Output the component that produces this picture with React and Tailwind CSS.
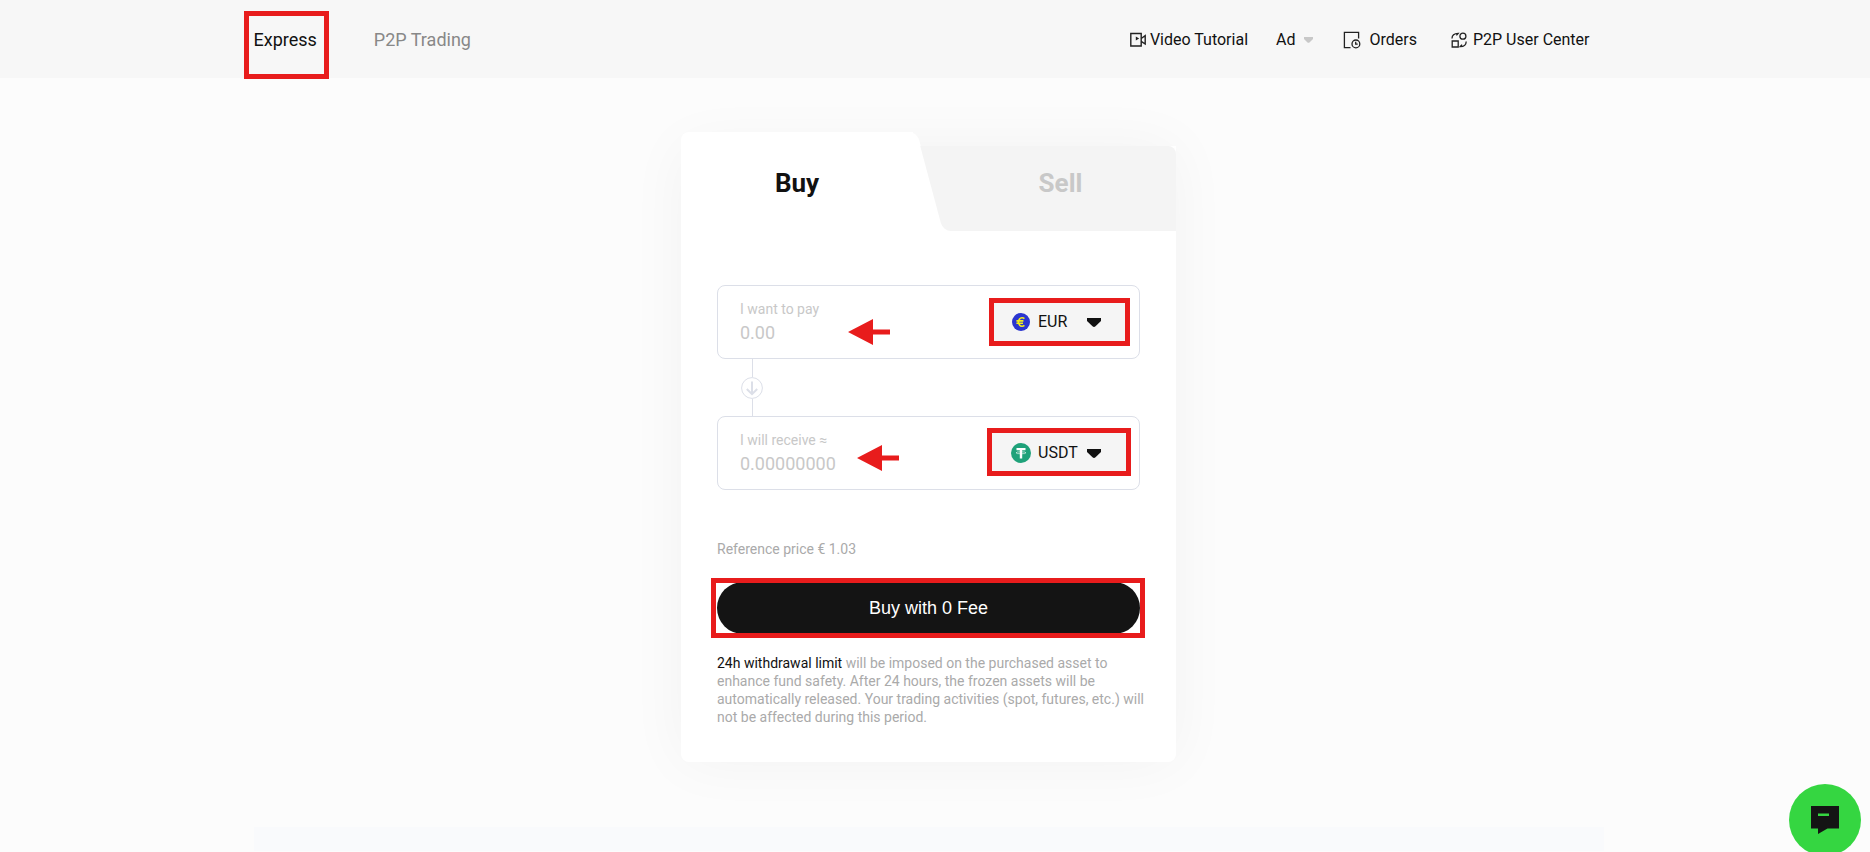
import React, { useState } from 'react';

const VideoIcon = () => (
  <svg className="w-4 h-4" viewBox="0 0 16 16" fill="none" stroke="#222" strokeWidth="1.4">
    <path d="M.8 1.500h10.400v12.500H.8z" />
    <path d="M11.200 6.500l4-2.800v8.300l-4-2.700" />
    <path d="M5.800 4.500l3.400 2-3.400 2z" fill="#222" stroke="none" />
  </svg>
);

const OrdersIcon = () => (
  <svg className="w-[18px] h-[18px]" viewBox="0 0 18 18" fill="none" stroke="#222" strokeWidth="1.3">
    <path d="M7.500 16.600H1.400V1.400h14.200v6" />
    <circle cx="12.900" cy="12.900" r="3.900" />
    <path d="M12.700 10.800v2.400h2" />
  </svg>
);

const UserCenterIcon = () => (
  <svg className="w-4 h-4" viewBox="0 0 16 16" fill="none" stroke="#222" strokeWidth="1.3">
    <circle cx="11.900" cy="4.200" r="3" />
    <path d="M1.200 9h6v6h-6z" />
    <path d="M1 6.600C1 3.400 3 1.400 7.200 1.400L5.400 3.400" />
    <path d="M15.200 9.400c0 3.200-2 5.200-6 5.200l1.800-2" />
  </svg>
);

const Caret = ({ className }) => (
  <svg className={className} viewBox="0 0 14 9" fill="currentColor">
    <path d="M0 0h14v3L8.500 8.300q-1.500 1.200-3 0L0 3z" />
  </svg>
);

const EuroIcon = () => (
  <svg className="w-[18px] h-[18px]" viewBox="0 0 18 18" fill="none">
    <circle cx="9" cy="9" r="9" fill="#2b36cf" />
    <path d="M12.400 5.600A3.600 4.300 0 1 0 12.400 12.400M4.400 7.900h7M4.400 10.200h6.600" stroke="#f5ee1c" strokeWidth="1.600" />
  </svg>
);

const TetherIcon = () => (
  <svg className="w-5 h-5" viewBox="0 0 20 20" fill="none">
    <circle cx="10" cy="10" r="10" fill="#1fa27a" />
    <path d="M5.500 5h9v2.200h-3.300V15.500H8.800V7.200H5.500z" fill="#fff" />
    <ellipse cx="10" cy="9.800" rx="5" ry="1" stroke="#fff" strokeWidth=".6" />
  </svg>
);

const RedArrow = ({ className }) => (
  <svg className={className} viewBox="0 0 42 26" fill="#e81c1c">
    <path d="M0 13L25 0v10.500h17v5H25V26z" />
  </svg>
);

const Mark = ({ className }) => (
  <span aria-hidden="true" className={`absolute border-[5px] border-[#e81c1c] pointer-events-none ${className}`} />
);

const Header = () => (
  <header className="bg-[#f7f7f7] pr-[13px]">
    <div className="max-w-[1350px] mx-auto h-[78px] pt-[2px] flex items-center justify-between">
      <nav className="flex items-center gap-[57px] text-lg">
        <a href="#express" className="relative text-[#111]">
          Express
          <Mark className="-left-[10px] -right-3 -top-[15px] -bottom-[25px]" />
        </a>
        <a href="#p2p" className="text-[#888]">P2P Trading</a>
      </nav>
      <nav className="flex items-center pr-[14px] text-base text-[#111]">
        <a href="#video" className="flex items-center gap-1 mr-7"><VideoIcon />Video Tutorial</a>
        <button type="button" className="flex items-center gap-2 mr-[30px]">
          Ad
          <Caret className="w-[9px] h-[6px] text-[#c8c8c8]" />
        </button>
        <a href="#orders" className="flex items-center gap-[9px] mr-[34px]"><OrdersIcon />Orders</a>
        <a href="#user-center" className="flex items-center gap-[6px]"><UserCenterIcon />P2P User Center</a>
      </nav>
    </div>
  </header>
);

const AmountField = ({ id, label, placeholder, currency, options, icon, arrowClass, markClass }) => (
  <div className="relative flex items-center justify-between h-[74px] pl-[22px] pr-[13px] rounded-lg border border-[#dcdfe8]">
    <div className="flex flex-col pt-[2px]">
      <label htmlFor={id} className="text-sm leading-5 text-[#c8c8c8]">{label}</label>
      <input
        id={id}
        type="text"
        placeholder={placeholder}
        className="w-[220px] h-7 text-lg bg-transparent outline-none text-[#111] placeholder:text-[#c8c8c8]"
      />
    </div>
    <div className="relative flex items-center w-[134px] h-10 pl-[19px] pr-[25px] bg-[#f5f5f5] text-[#111]">
      <span className="flex justify-center w-5">{icon}</span>
      <select aria-label={`${label} currency`} defaultValue={currency} className="flex-1 min-w-0 ml-[7px] appearance-none bg-transparent text-base outline-none">
        {options.map((option) => <option key={option}>{option}</option>)}
      </select>
      <Caret className="w-[14px] h-[9px]" />
      <Mark className={markClass} />
    </div>
    <RedArrow className={`absolute w-[42px] h-[26px] ${arrowClass}`} />
  </div>
);

function App() {
  const [tab, setTab] = useState('buy');

  return (
    <div className="min-h-screen bg-[#fcfcfc] font-['Roboto','Liberation_Sans',sans-serif]">
      <Header />

      <main className="pt-[68px] pr-[13px]">
        <section className="max-w-[495px] mx-auto bg-white rounded-b-lg shadow-[0_0_60px_rgba(0,50,30,0.045)]">
          <div role="tablist" className="flex items-end text-[26px] font-bold">
            <button
              type="button"
              role="tab"
              aria-selected={tab === 'buy'}
              onClick={() => setTab('buy')}
              className="relative w-[232px] h-[99px] -mt-[14px] pt-[3px] bg-white rounded-tl-lg text-[#111] after:absolute after:top-0 after:-right-1 after:w-1/2 after:h-5 after:bg-white after:rounded-tr-lg after:origin-top after:skew-x-[15deg]"
            >
              Buy
            </button>
            <button
              type="button"
              role="tab"
              aria-selected={tab === 'sell'}
              onClick={() => setTab('sell')}
              className="relative flex-1 h-[85px] pl-8 pb-[10px] text-[#c8c8c8] before:absolute before:inset-y-0 before:left-[30px] before:w-1/2 before:bg-[#f4f4f4] before:rounded-bl-lg before:origin-bottom before:skew-x-[15deg] after:absolute after:inset-y-0 after:right-0 after:left-[50px] after:bg-[#f4f4f4] after:rounded-tr-lg"
            >
              <span className="relative z-10">Sell</span>
            </button>
          </div>

          <div className="px-9 pt-[54px] pb-9">
            <AmountField
              id="pay"
              label="I want to pay"
              placeholder="0.00"
              currency="EUR"
              options={['EUR', 'USD', 'GBP']}
              icon={<EuroIcon />}
              arrowClass="left-[130px] top-[33px]"
              markClass="-left-[3px] -right-1 -inset-y-1"
            />
            <div className="flex flex-col items-center w-[22px] h-[57px] ml-6 text-[#dcdfe8]">
              <span className="w-px flex-1 bg-current" />
              <svg className="w-[22px] h-[22px]" viewBox="0 0 22 22" fill="none" stroke="currentColor">
                <circle cx="11" cy="11" r="10.400" />
                <path d="M11 4.500v12.500M5.800 12l5.200 5.200 5.200-5.200" strokeWidth="2" />
              </svg>
              <span className="w-px flex-1 bg-current" />
            </div>
            <AmountField
              id="receive"
              label="I will receive ≈"
              placeholder="0.00000000"
              currency="USDT"
              options={['USDT', 'USDC', 'BTC']}
              icon={<TetherIcon />}
              arrowClass="left-[139px] top-[28px]"
              markClass="-inset-x-[5px] -top-[5px] -bottom-[3px]"
            />

            <p className="mt-[49px] text-sm leading-5 text-[#aaa]">Reference price € 1.03</p>

            <div className="relative mt-[23px]">
              <button type="button" className="w-full h-[52px] rounded-full bg-[#141414] text-white text-lg font-['Liberation_Sans',sans-serif]">
                Buy with 0 Fee
              </button>
              <Mark className="-left-[6px] -right-[5px] -inset-y-1" />
            </div>

            <p className="mt-5 -mr-3 text-sm leading-[18px] text-[#aaa]">
              <span className="text-[#111]">24h withdrawal limit</span> will be imposed on the purchased asset to enhance fund safety. After 24 hours, the frozen assets will be automatically released. Your trading activities (spot, futures, etc.) will not be affected during this period.
            </p>
          </div>
        </section>

        <section className="max-w-[1350px] mx-auto mt-[65px] h-6 bg-[#f9fafc]" />
      </main>

      <button type="button" aria-label="Open chat" className="fixed right-[9px] -bottom-1 w-[72px] h-[72px] rounded-full bg-[#35d641] flex items-center justify-center">
        <svg className="w-7 h-7" viewBox="0 0 28 28">
          <path d="M0 0h28v22.500H16.500L7 28v-5.500H0z" fill="#141414" />
          <path d="M7 7.500h11v2.500H7z" fill="#35d641" />
        </svg>
      </button>
    </div>
  );
}

export default App;
